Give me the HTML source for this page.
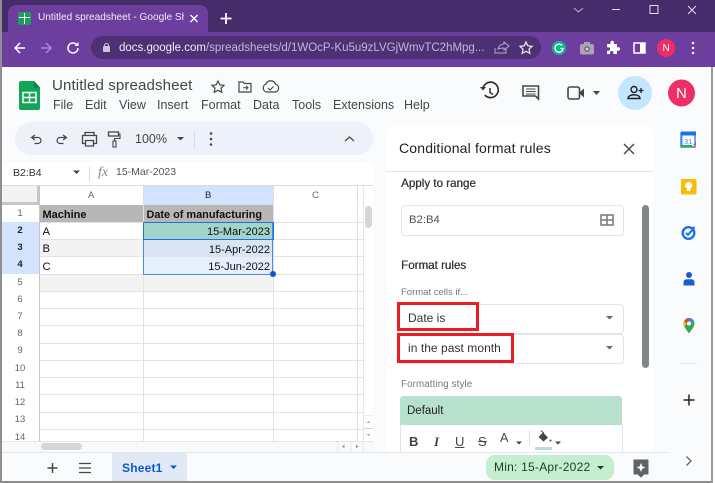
<!DOCTYPE html>
<html><head><meta charset="utf-8"><style>
html,body{margin:0;padding:0;width:715px;height:483px;overflow:hidden;background:#f9fbfd;font-family:"Liberation Sans",sans-serif}
.a{position:absolute}
.t{position:absolute;white-space:nowrap;line-height:1}
svg{position:absolute;overflow:visible}
.menu{font-size:12.5px;color:#444746;top:99px}
.rn{position:absolute;left:1px;width:38px;text-align:center;font-size:9.5px;color:#666;line-height:17px;height:17px}
.h{position:absolute;height:1px;left:39px;width:324px;background:#e2e3e3}
.v{position:absolute;width:1px;top:205px;height:236px;background:#e2e3e3}
.c{position:absolute;font-size:11.3px;color:#111;line-height:17px;white-space:nowrap}
.ic{fill:none;stroke:#444746;stroke-width:1.3}
</style></head><body>
<!-- chrome -->
<div class="a" style="left:0;top:0;width:715px;height:32px;background:#472c6b"></div>
<div class="a" style="left:0;top:32px;width:715px;height:35px;background:#6c3f9f"></div>
<div class="a" style="left:8px;top:5px;width:200px;height:28px;background:#6c3f9f;border-radius:8px 8px 0 0"></div>
<div class="a" style="left:18px;top:12px;width:13px;height:13px;background:#1e9c58;border-radius:2px"></div>
<div class="a" style="left:24px;top:13px;width:1px;height:11px;background:#fff"></div>
<div class="a" style="left:19px;top:17px;width:11px;height:1px;background:#fff"></div>
<div class="t" style="left:38px;top:11px;width:146px;overflow:hidden;font-size:10.1px;color:#f0e9f7;line-height:14px">Untitled spreadsheet - Google Sh</div>
<svg style="left:0;top:0" width="715" height="67">
<path d="M190.500 15l7 7M197.500 15l-7 7" stroke="#fff" stroke-width="1.400"/>
<path d="M226 13v11M220.500 18.500h11" stroke="#fff" stroke-width="1.800"/>
<path d="M15 48h10M20 43l-5 5 5 5" fill="none" stroke="#fff" stroke-width="1.500"/>
<path d="M41 48h10M46 43l5 5-5 5" fill="none" stroke="#a98bcb" stroke-width="1.500"/>
<path d="M78 48a5 5 0 1 1-1.500-3.600" fill="none" stroke="#fff" stroke-width="1.500"/><path d="M78.500 42v4h-4z" fill="#fff"/>
<path d="M574 8l4.500 4 4.500-4" fill="none" stroke="#c2b6d0" stroke-width="1"/>
<path d="M612 9.500h8" stroke="#e4dcec" stroke-width="1"/>
<rect x="650" y="5.500" width="8" height="8" fill="none" stroke="#e4dcec" stroke-width="1"/>
<path d="M688 6l8 8M696 6l-8 8" stroke="#e4dcec" stroke-width="1"/>
</svg>
<div class="a" style="left:91px;top:36px;width:450px;height:23px;background:#4e3075;border-radius:12px"></div>
<div class="a" style="left:103px;top:46px;width:7px;height:6px;background:#cdc3da;border-radius:1px"></div>
<div class="a" style="left:104px;top:43px;width:3px;height:3px;border:1px solid #cdc3da;border-bottom:0;border-radius:3px 3px 0 0"></div>
<div class="t" style="left:119px;top:41px;font-size:11.5px;color:#f2edf7;line-height:14px">docs.google.com<span style="color:#c4b5d6">/spreadsheets/d/1WOcP-Ku5u9zLVGjWmvTC2hMpg...</span></div>
<svg style="left:0;top:0" width="715" height="67">
<path d="M495 48v5h11v-4M498 49c1-4 4-5 6-5v-2l5 4-5 4v-2c-2 0-4 0-6 1z" fill="none" stroke="#b9a9cc" stroke-width="1"/>
<path d="M526 42l1.800 3.800 4.200.5-3 2.900.8 4.100-3.800-2-3.800 2 .8-4.100-3-2.900 4.200-.5z" fill="none" stroke="#e8e1f0" stroke-width="1.300"/>
<circle cx="559" cy="48" r="7" fill="#13b58e"/>
<path d="M562 45.500a4 4 0 1 0 1 3h-3" fill="none" stroke="#fff" stroke-width="1.300"/>
<rect x="580" y="44" width="14" height="10.500" rx="2" fill="#a9a6ad"/><rect x="584" y="42" width="6" height="3" fill="#a9a6ad"/><circle cx="587" cy="49" r="2.700" fill="#6c3f9f"/><circle cx="587" cy="49" r="1.500" fill="#ddd"/>
<path d="M607 44h3.500v-1.500a1.700 1.700 0 0 1 3.400 0V44h3v3.200h1.400a1.800 1.800 0 0 1 0 3.600h-1.400V54H613.500v-1.300a1.700 1.700 0 0 0-3.400 0V54H607v-3.200h1.300a1.800 1.800 0 0 0 0-3.600H607z" fill="#fff"/>
<rect x="634" y="43" width="11" height="10" fill="none" stroke="#fff" stroke-width="1.500"/><rect x="640" y="43" width="5.500" height="10" fill="#fff"/>
<circle cx="666" cy="48" r="9" fill="#ee2f66"/>
<circle cx="693" cy="43" r="1.300" fill="#eee"/><circle cx="693" cy="48" r="1.300" fill="#eee"/><circle cx="693" cy="53" r="1.300" fill="#eee"/>
</svg>
<div class="t" style="left:662.500px;top:43px;font-size:10px;color:#fff;line-height:11px">N</div>
<!-- sheets header -->
<svg style="left:19px;top:81px" width="22" height="29"><path d="M2 0h13l6 6.500V27a2 2 0 0 1-2 2H2a2 2 0 0 1-2-2V2a2 2 0 0 1 2-2z" fill="#12a555"/><path d="M15 0l6 6.500h-6z" fill="#0c7f42"/><rect x="4" y="11.500" width="13" height="10" fill="none" stroke="#fff" stroke-width="1.500"/><path d="M4 16.500h13M10.500 11.500v10" stroke="#fff" stroke-width="1.500"/></svg>
<div class="t" style="left:52px;top:77px;font-size:15.1px;color:#444746;line-height:18px;letter-spacing:.1px">Untitled spreadsheet</div>
<div class="t menu" style="left:53px">File</div><div class="t menu" style="left:85px">Edit</div><div class="t menu" style="left:119px">View</div><div class="t menu" style="left:157px">Insert</div><div class="t menu" style="left:201px">Format</div><div class="t menu" style="left:253px">Data</div><div class="t menu" style="left:292px">Tools</div><div class="t menu" style="left:333px">Extensions</div><div class="t menu" style="left:404px">Help</div>
<svg style="left:0;top:0" width="715" height="125">
<path d="M218 81l1.800 3.800 4.200.5-3 2.900.8 4.100-3.800-2-3.800 2 .8-4.100-3-2.900 4.200-.5z" class="ic" style="stroke-width:1.200"/>
<path d="M239 82h4l1.500 1.500h6.500v8.500h-12z" class="ic" style="stroke-width:1.200"/><path d="M243 87.800h5M246 85.800l2 2-2 2" class="ic" style="stroke-width:1"/>
<path d="M268 92h-1a4 4 0 0 1-1-7.800 5 5 0 0 1 9.500 0 4 4 0 0 1 0 7.800z" class="ic" style="stroke-width:1.200"/><path d="M268 88l2 2 3.500-3.500" class="ic" style="stroke-width:1.100"/>
<path d="M483 88.500a7.700 7.700 0 1 1 1.800 6.500" class="ic" style="stroke-width:1.700;stroke:#333"/><path d="M480 87l3 3.500 3-3.500z" fill="#333"/><path d="M490 88v4.500l3 2" class="ic" style="stroke-width:1.500;stroke:#333"/>
<path d="M523 86h15.500v13l-3-3H523z" class="ic" style="stroke-width:1.600"/><path d="M526 89h9.500M526 91.500h9.500M526 94h9.500" stroke="#444746" stroke-width="1"/>
<rect x="568" y="87" width="11.500" height="12" rx="2" class="ic" style="stroke-width:1.600"/><path d="M580 92l4-3.500v9l-4-3.500z" fill="#444746"/>
<path d="M593 91h7l-3.500 4z" fill="#444746"/>
<circle cx="635" cy="93" r="17" fill="#c2e7ff"/>
<circle cx="634" cy="89.500" r="3" fill="none" stroke="#1f1f1f" stroke-width="1.400"/><path d="M628 98.500c0-5 12-5 12 0z" fill="none" stroke="#1f1f1f" stroke-width="1.400"/><path d="M641 88v5M638.500 90.500h5" stroke="#1f1f1f" stroke-width="1.300"/>
<circle cx="681.500" cy="93" r="13.500" fill="#ee2f66"/>
</svg>
<div class="t" style="left:676px;top:86px;font-size:15px;color:#fff;line-height:16px">N</div>
<!-- toolbar -->
<div class="a" style="left:15px;top:122px;width:358px;height:33px;background:#edf2fa;border-radius:17px"></div>
<svg style="left:0;top:122px" width="380" height="33">
<path d="M35 13l-3.500 2.500L35 18M32 15.500h6a3 3 0 0 1 0 6h-3.500" class="ic" style="stroke-width:1.200"/>
<path d="M63 13l3.500 2.500L63 18M66 15.500h-6a3 3 0 0 0 0 6h3.500" class="ic" style="stroke-width:1.200"/>
<path d="M85 13v-2.500h9V13M85 21.500h-2.500v-8h14v8H94M85.500 18.500h8v5.500h-8z" class="ic"/>
<rect x="108.500" y="10" width="10" height="4" class="ic"/><path d="M118.500 12h1.500v4.500h-5.500V19" class="ic" style="stroke-width:1.100"/><rect x="113" y="19" width="3" height="6" class="ic" style="stroke-width:1.100"/>
<path d="M177 15h7l-3.500 3.500z" fill="#444746"/>
<path d="M194.500 9v17" stroke="#d5dae0"/>
<circle cx="211" cy="11.500" r="1.300" fill="#444746"/><circle cx="211" cy="17" r="1.300" fill="#444746"/><circle cx="211" cy="22.500" r="1.300" fill="#444746"/>
<path d="M345 19l4.500-4 4.500 4" class="ic"/>
</svg>
<div class="t" style="left:135px;top:132px;font-size:12.500px;color:#444746;line-height:14px">100%</div>
<!-- formula bar -->
<div class="a" style="left:1px;top:162px;width:372px;height:23px;background:#fff"></div>
<div class="t" style="left:13px;top:167px;font-size:10.500px;color:#333;line-height:13px">B2:B4</div>
<svg style="left:0;top:160px" width="120" height="26"><path d="M73 10.500h7L76.500 14z" fill="#444"/><path d="M89.500 7v14" stroke="#d9d9d9"/></svg>
<div class="t" style="left:98px;top:165px;font-size:14px;font-style:italic;font-family:'Liberation Serif',serif;color:#888;line-height:16px">fx</div>
<div class="t" style="left:116px;top:166px;font-size:10.500px;color:#555;line-height:13px">15-Mar-2023</div>
<!-- grid -->
<div class="a" style="left:1px;top:185px;width:372px;height:267px;background:#fff"></div>
<div class="a" style="left:1px;top:185px;width:372px;height:1px;background:#dadce0"></div>
<div class="a" style="left:1px;top:186px;width:36px;height:16px;background:#f3f3f3;border-right:3px solid #c4c7c5;border-bottom:3px solid #c4c7c5"></div>
<div class="a" style="left:143px;top:186px;width:130px;height:19px;background:#d3e3fd"></div>
<div class="t" style="left:88px;top:190px;font-size:9.500px;color:#666;line-height:11px">A</div>
<div class="t" style="left:205px;top:190px;font-size:9.500px;color:#223;line-height:11px">B</div>
<div class="t" style="left:312px;top:190px;font-size:9.500px;color:#666;line-height:11px">C</div>
<!-- fills -->
<div class="a" style="left:40px;top:205px;width:233px;height:17px;background:#b7b7b7"></div>
<div class="a" style="left:40px;top:240px;width:103px;height:16px;background:#f3f3f3"></div>
<div class="a" style="left:40px;top:274px;width:233px;height:17px;background:#f3f3f3"></div>
<div class="a" style="left:143px;top:222px;width:130px;height:17px;background:#a3d4c9"></div>
<div class="a" style="left:143px;top:239px;width:130px;height:17px;background:#dbe4f4"></div>
<div class="a" style="left:143px;top:256px;width:130px;height:18px;background:#e6effd"></div>
<div class="a" style="left:1px;top:222px;width:38px;height:52px;background:#d3e3fd"></div>
<!-- lines -->
<div class="h" style="top:222px"></div><div class="h" style="top:239px"></div><div class="h" style="top:256px"></div><div class="h" style="top:274px"></div><div class="h" style="top:291px"></div><div class="h" style="top:308px"></div><div class="h" style="top:325px"></div><div class="h" style="top:343px"></div><div class="h" style="top:360px"></div><div class="h" style="top:377px"></div><div class="h" style="top:394px"></div><div class="h" style="top:412px"></div><div class="h" style="top:429px"></div>
<div class="v" style="left:39px;background:#c7c7c7"></div><div class="v" style="left:143px"></div><div class="v" style="left:273px"></div><div class="v" style="left:357px"></div>
<div class="a" style="left:143px;top:186px;width:1px;height:19px;background:#dadce0"></div><div class="a" style="left:273px;top:186px;width:1px;height:19px;background:#dadce0"></div><div class="a" style="left:357px;top:186px;width:1px;height:19px;background:#dadce0"></div>
<!-- numbers -->
<div class="rn" style="top:205px">1</div><div class="rn" style="top:222px;color:#223;font-weight:bold">2</div><div class="rn" style="top:239px;color:#223;font-weight:bold">3</div><div class="rn" style="top:256px;color:#223;font-weight:bold">4</div><div class="rn" style="top:274px">5</div><div class="rn" style="top:291px">6</div><div class="rn" style="top:308px">7</div><div class="rn" style="top:325px">8</div><div class="rn" style="top:342px">9</div><div class="rn" style="top:360px">10</div><div class="rn" style="top:377px">11</div><div class="rn" style="top:394px">12</div><div class="rn" style="top:411px">13</div><div class="rn" style="top:429px">14</div>
<!-- cells -->
<div class="c" style="left:42.500px;top:207px;font-weight:bold;font-size:11px">Machine</div>
<div class="c" style="left:146.500px;top:207px;font-weight:bold;font-size:10.900px">Date of manufacturing</div>
<div class="c" style="left:42.500px;top:224px">A</div><div class="c" style="left:42.500px;top:241px">B</div><div class="c" style="left:42.500px;top:259px">C</div>
<div class="c" style="right:445px;top:224px;font-size:11px">15-Mar-2023</div><div class="c" style="right:445px;top:242px;font-size:11px">15-Apr-2022</div><div class="c" style="right:445px;top:259px;font-size:11px">15-Jun-2022</div>
<div class="a" style="left:143px;top:222px;width:128px;height:51px;border:1px solid #4a89e8"></div>
<div class="a" style="left:143px;top:222px;width:129px;height:16px;border:1px solid #1a73e8"></div>
<div class="a" style="left:270px;top:271px;width:6px;height:6px;background:#0b57d0;border-radius:50%"></div>
<!-- v scroll -->
<div class="a" style="left:363px;top:186px;width:10px;height:266px;background:#fff;border-left:1px solid #e8e8e8;box-sizing:border-box"></div>
<div class="a" style="left:365px;top:206px;width:7px;height:22px;background:#d6d6d6;border-radius:4px"></div>
<div class="a" style="left:364px;top:415px;width:9px;height:1px;background:#eceef0"></div><div class="a" style="left:364px;top:428px;width:9px;height:1px;background:#c5d5ec"></div>
<svg style="left:364px;top:417px" width="9" height="24"><path d="M2.500 6l2-2 2 2z" fill="#aaa"/><path d="M2.500 17l2 2 2-2z" fill="#aaa"/></svg>
<!-- h scroll -->
<div class="a" style="left:1px;top:441px;width:372px;height:12px;background:#f8f9fa;border-top:1px solid #e6e6e6;box-sizing:border-box"></div>
<div class="a" style="left:41px;top:443px;width:41px;height:7px;background:#d4d6d8;border-radius:4px"></div>
<svg style="left:335px;top:441px" width="30" height="12"><path d="M9.500 3.500v4L7 5.500z M21 3.500v4l2.500-2z" fill="#999"/><path d="M3 1v10M16 1v10M28 1v10" stroke="#e9e9e9"/></svg>
<!-- bottom bar -->
<div class="a" style="left:0;top:452px;width:668px;height:1px;background:#e3e6ea"></div>
<svg style="left:0;top:452px" width="120" height="30"><path d="M52.500 11v10M47.500 16h10" stroke="#444746" stroke-width="1.500"/><path d="M79 11.500h12M79 16h12M79 20.500h12" stroke="#444746" stroke-width="1.300"/></svg>
<div class="a" style="left:112px;top:452px;width:75px;height:29px;background:#e1e9f7"></div>
<div class="t" style="left:122px;top:461px;font-size:12px;font-weight:bold;color:#0b57d0;line-height:14px;letter-spacing:.2px">Sheet1</div>
<svg style="left:169px;top:464px" width="10" height="8"><path d="M1 1.500h7L4.500 5z" fill="#0b57d0"/></svg>
<div class="a" style="left:486px;top:455px;width:128px;height:25px;background:#c4eed0;border-radius:9px"></div>
<div class="t" style="left:494px;top:460px;font-size:12px;color:#1f3a29;line-height:15px;letter-spacing:.23px">Min: 15-Apr-2022</div>
<svg style="left:595px;top:464px" width="12" height="8"><path d="M2 2h7L5.500 5.500z" fill="#1f3a29"/></svg>
<svg style="left:632px;top:458px" width="20" height="22"><path d="M2 2h14v14h-4l-3 3-3-3H2z" fill="#5f6368" stroke="#5f6368" stroke-linejoin="round"/><path d="M9 5l1.300 3.200L13.500 9.500l-3.200 1.300L9 14l-1.300-3.200L4.500 9.500l3.200-1.300z" fill="#fff"/></svg>
<!-- panel -->
<div class="a" style="left:386px;top:125px;width:267px;height:327px;background:#fff;border-radius:12px 12px 0 0"></div>
<div class="a" style="left:386px;top:171px;width:267px;height:1px;background:#e0e2e5"></div>
<div class="t" style="left:399px;top:140px;font-size:14px;color:#202124;line-height:16px;letter-spacing:.17px">Conditional format rules</div>
<svg style="left:623px;top:143px" width="12" height="12"><path d="M1 1l10 10M11 1L1 11" stroke="#444" stroke-width="1.300"/></svg>
<div class="t" style="left:401px;top:176px;font-size:11.600px;color:#333;line-height:15px;text-shadow:.3px 0 0 #333">Apply to range</div>
<div class="a" style="left:401px;top:205px;width:221px;height:29px;border:1px solid #e3e4e6;border-radius:4px"></div>
<div class="t" style="left:409px;top:213px;font-size:11.300px;color:#555;line-height:14px">B2:B4</div>
<svg style="left:600px;top:214px" width="15" height="14"><rect x="1" y="1" width="12" height="10" fill="none" stroke="#777" stroke-width="1.500"/><path d="M1 6h12M7 1v10" stroke="#777" stroke-width="1.500"/></svg>
<div class="t" style="left:401px;top:258px;font-size:11.600px;color:#333;line-height:15px;text-shadow:.3px 0 0 #333">Format rules</div>
<div class="t" style="left:401px;top:287px;font-size:9.500px;color:#777;line-height:12px">Format cells if...</div>
<div class="a" style="left:642px;top:205px;width:7px;height:163px;background:#80868b;border-radius:4px"></div>
<div class="a" style="left:397px;top:304px;width:225px;height:28px;border:1px solid #e3e4e6;border-radius:4px"></div>
<div class="a" style="left:397px;top:334px;width:225px;height:28px;border:1px solid #e3e4e6;border-radius:4px"></div>
<div class="a" style="left:397px;top:302px;width:76px;height:23px;border:3px solid #ec1c24"></div>
<div class="a" style="left:397px;top:333px;width:111px;height:24px;border:3px solid #ec1c24"></div>
<div class="t" style="left:408px;top:311px;font-size:12px;color:#333;line-height:14px">Date is</div>
<div class="t" style="left:408px;top:341px;font-size:12px;color:#333;line-height:14px;letter-spacing:.05px">in the past month</div>
<svg style="left:605px;top:314px" width="10" height="40"><path d="M1 2h7L4.500 5.500z" fill="#666"/><path d="M1 32h7l-3.500 3.500z" fill="#666"/></svg>
<div class="t" style="left:401px;top:379px;font-size:9.800px;color:#777;line-height:12px;letter-spacing:.1px">Formatting style</div>
<div class="a" style="left:400px;top:396px;width:222px;height:29px;background:#b7e1cd;border-radius:3px 3px 0 0"></div>
<div class="t" style="left:407px;top:404px;font-size:11.500px;color:#222;line-height:14px">Default</div>
<div class="a" style="left:400px;top:425px;width:221px;height:27px;border-left:1px solid #e3e4e6;border-right:1px solid #e3e4e6"></div>
<div class="t" style="left:409px;top:434px;font-size:13px;font-weight:bold;color:#444;line-height:15px">B</div>
<div class="t" style="left:434px;top:434px;font-size:13px;font-weight:bold;font-style:italic;font-family:'Liberation Serif',serif;color:#444;line-height:15px">I</div>
<div class="t" style="left:455px;top:434px;font-size:13px;color:#444;line-height:15px;text-decoration:underline">U</div>
<div class="t" style="left:478px;top:434px;font-size:13px;color:#444;line-height:15px;text-decoration:line-through">S</div>
<div class="t" style="left:500px;top:431px;font-size:12.500px;color:#444;line-height:15px">A</div>
<svg style="left:400px;top:425px" width="170" height="27"><path d="M116 16.500h6l-3 3zM155 16.500h6l-3 3z" fill="#444"/><path d="M129.500 6v15" stroke="#ddd"/>
<path d="M143 7.500l5 5-4.500 4-5-4.500z" fill="#444"/><path d="M141 5.500l3 3" stroke="#444"/><circle cx="150.500" cy="15.500" r="1" fill="#444"/><rect x="135" y="22" width="17" height="3" fill="#b7e1cd"/></svg>
<!-- side icons -->
<svg style="left:0;top:120px" width="715" height="290">
<rect x="681" y="13" width="14" height="14" fill="#fff" stroke="#4285f4" stroke-width="1.500"/><path d="M681 11.500h15v4h-15z" fill="#1a73e8"/><path d="M680.500 25h12v2.500h-12z" fill="#34a853"/><path d="M693 25l3-3v3z" fill="#ea4335"/><path d="M680.500 15v10h2v-10z" fill="#4285f4"/>
<text x="684" y="24" font-size="7.500" font-family="Liberation Sans" fill="#4285f4">31</text>
<rect x="681" y="59" width="15.500" height="15.500" rx="1.500" fill="#fbbc04"/><circle cx="688.700" cy="65.500" r="3.600" fill="#fff"/><rect x="686.800" y="69" width="3.800" height="2" fill="#fff"/>
<circle cx="688.500" cy="113" r="5.800" fill="none" stroke="#1a73e8" stroke-width="2.400"/><path d="M686 112.800l2 2 4.500-5" fill="none" stroke="#1a73e8" stroke-width="2"/><path d="M692 107l3-.5-.5 3z" fill="#1a73e8"/>
<circle cx="689" cy="155" r="3" fill="#1a5ed0"/><path d="M683.500 165.500v-3.300a3 3 0 0 1 3-3h5a3 3 0 0 1 3 3v3.300z" fill="#1a5ed0"/>
</svg>
<svg style="left:683px;top:318px" width="12" height="16"><path d="M6 15.500C3 11 .5 8.500.5 5.500a5.500 5.500 0 0 1 11 0C11.500 8.500 9 11 6 15.500z" fill="#34a853"/><path d="M1.500 3A5.500 5.500 0 0 1 6 0v3.500L3.500 6z" fill="#ea4335"/><path d="M6 0a5.500 5.500 0 0 1 5 3L8 6 6 3.500z" fill="#4285f4"/><path d="M.5 5.500A5 5 0 0 1 1.500 3l2 3-2.500 3z" fill="#fbbc04"/><circle cx="6" cy="5.500" r="2" fill="#fff"/></svg>
<div class="a" style="left:680px;top:363px;width:17px;height:1px;background:#e3e6ea"></div>
<svg style="left:682px;top:393px" width="14" height="14"><path d="M7 1.500v11M1.500 7h11" stroke="#222" stroke-width="1.500"/></svg>
<svg style="left:684px;top:455px" width="10" height="12"><path d="M2.500 1.500l4.500 4.500-4.500 4.500" fill="none" stroke="#666" stroke-width="1.300"/></svg>
<!-- window edges -->
<div class="a" style="left:0;top:0;width:1.500px;height:483px;background:#8f8f8f"></div>
<div class="a" style="left:0;top:481px;width:715px;height:2px;background:#8d8d8d"></div>
<div class="a" style="left:711px;top:67px;width:1.500px;height:416px;background:#9a9a9a"></div>
<div class="a" style="left:712.500px;top:67px;width:3px;height:416px;background:#fff"></div>
</body></html>
